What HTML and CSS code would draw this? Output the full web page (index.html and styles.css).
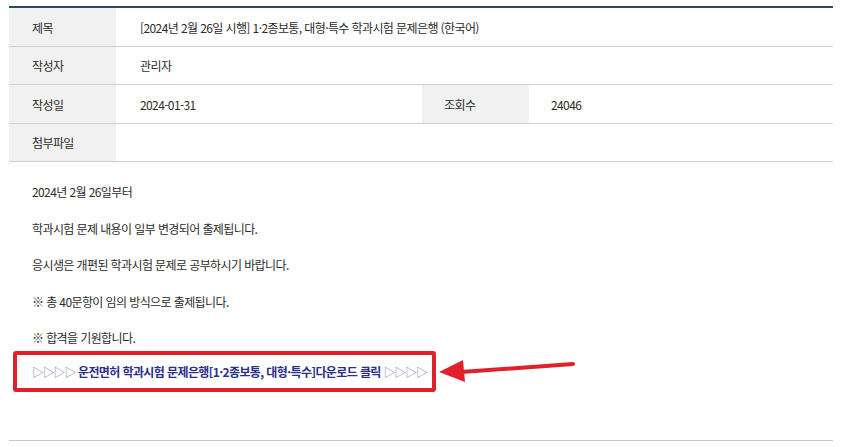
FILE: index.html
```html
<!DOCTYPE html>
<html lang="ko">
<head>
<meta charset="utf-8">
<link rel="stylesheet" href="styles.css">
</head>
<body>
<div class="board">
  <table class="info">
    <colgroup>
      <col class="c-label">
      <col class="c-mid">
      <col class="c-label">
      <col>
    </colgroup>
    <tr class="r1">
      <th>제목</th>
      <td colspan="3">[2024년 2월 26일 시행] 1·2종보통, 대형·특수 학과시험 문제은행 (한국어)</td>
    </tr>
    <tr class="r2">
      <th>작성자</th>
      <td colspan="3">관리자</td>
    </tr>
    <tr class="r3">
      <th>작성일</th>
      <td>2024-01-31</td>
      <th class="th2">조회수</th>
      <td class="td2">24046</td>
    </tr>
    <tr class="r4">
      <th>첨부파일</th>
      <td colspan="3"></td>
    </tr>
  </table>
  <div class="content">
    <p>2024년 2월 26일부터</p>
    <p>학과시험 문제 내용이 일부 변경되어 출제됩니다.</p>
    <p>응시생은 개편된 학과시험 문제로 공부하시기 바랍니다.</p>
    <p>※ 총 40문항이 임의 방식으로 출제됩니다.</p>
    <p>※ 합격을 기원합니다.</p>
    <div class="linkbox">
      <span class="tri">▷▷▷▷</span> <a class="dl">운전면허 학과시험 문제은행[1·2종보통, 대형·특수]다운로드 클릭</a> <span class="tri">▷▷▷▷</span>
    </div>
  </div>
  <svg class="arrow" width="140" height="30" viewBox="0 0 140 30">
    <path d="M134 5 L22 13" stroke="#e0202a" stroke-width="4" stroke-linecap="round" fill="none"/>
    <path d="M0 13 L24 1 L26 23 Z" fill="#e0202a"/>
  </svg>
</div>
</body>
</html>
```

FILE: styles.css
```css
html, body {
  margin: 0;
  padding: 0;
  background: #fff;
}
body {
  font-family: "Noto Sans CJK KR", "Noto Sans", sans-serif;
  font-size: 12px;
  color: #2b2b2b;
  letter-spacing: -0.6px;
}
.board {
  position: relative;
  width: 824px;
  height: 435px;
  margin: 6px 0 0 9px;
  border-bottom: 1px solid #c8c8c8;
  box-sizing: border-box;
}
.info {
  width: 824px;
  border-collapse: collapse;
  border-top: 2px solid #2c4b5c;
  table-layout: fixed;
}
.c-label {
  width: 107px;
}
.c-mid {
  width: 306px;
}
.info th, .info td {
  border-bottom: 1px solid #cfcfcf;
  text-align: left;
  font-weight: normal;
  padding: 0 0 0 24px;
}
.info .r1 th, .info .r1 td {
  height: 38px;
}
.info .r2 th, .info .r2 td {
  height: 37px;
}
.info .r3 th, .info .r3 td {
  height: 38px;
}
.info .r4 th, .info .r4 td {
  height: 37px;
}
.info th {
  background: #f1f1f1;
  padding-left: 23px;
}
.info th.th2 {
  padding-left: 22px;
}
.info td.td2 {
  padding-left: 22px;
}
.content {
  padding: 20px 0 0 0;
}
.content p {
  margin: 0 0 16.5px;
  line-height: 20px;
  padding-left: 23px;
}
.content p:last-of-type {
  margin-bottom: 3px;
}
.linkbox {
  margin-left: 4px;
  width: 423px;
  height: 41px;
  box-sizing: border-box;
  border: 4px solid #e0202a;
  border-radius: 3px;
  padding-left: 15px;
  line-height: 33px;
  white-space: nowrap;
}
.tri {
  color: #7f80b0;
  letter-spacing: -1.2px;
}
.dl {
  color: #2a2f8a;
  font-weight: bold;
}
.arrow {
  position: absolute;
  left: 430px;
  top: 353px;
}
```
